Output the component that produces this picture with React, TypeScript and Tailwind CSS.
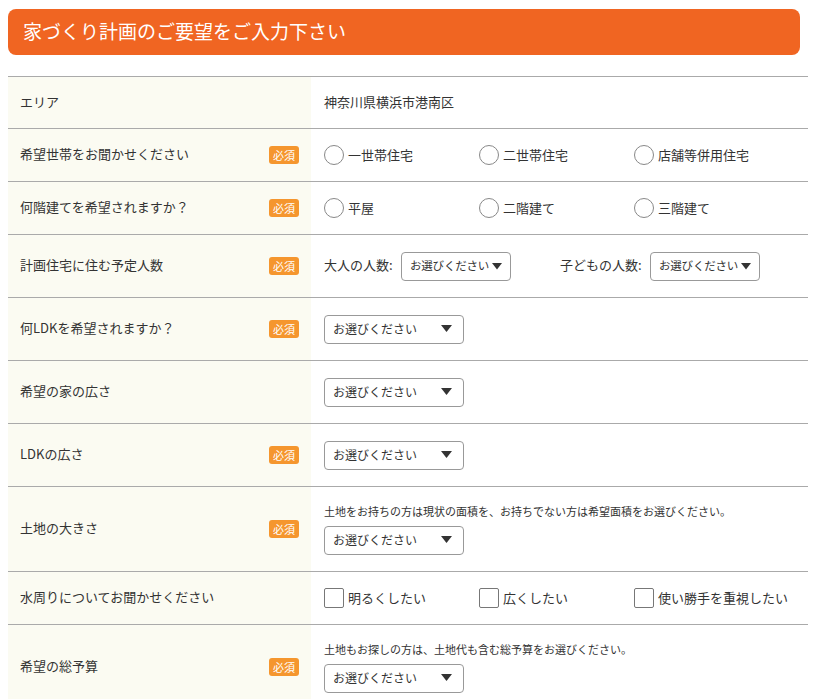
import React from "react";

const font = { fontFamily: '"Noto Sans CJK JP", "Noto Sans", sans-serif' };

function Badge() {
  return (
    <span className="inline-flex items-center justify-center w-[30px] h-[18px] rounded-[3px] bg-[#f5962e] text-white text-[11px] leading-none">
      必須
    </span>
  );
}

function Arrow({ small = false }: { small?: boolean }) {
  return small ? (
    <svg width="10" height="7" viewBox="0 0 10 7" className="shrink-0 ml-[3px]">
      <path d="M0 0 L10 0 L5 6.5 Z" fill="#333" />
    </svg>
  ) : (
    <svg width="11" height="8" viewBox="0 0 11 8" className="shrink-0">
      <path d="M0 0 L11 0 L5.5 7 Z" fill="#333" />
    </svg>
  );
}

function Select({ w = 140, small = false }: { w?: number; small?: boolean }) {
  return (
    <div
      className={`flex items-center h-[29px] border border-[#999] rounded-[4px] bg-white whitespace-nowrap ${small ? "justify-start pl-[8px]" : "justify-between pl-[8px] pr-[11px]"}`}
      style={{ width: w }}
    >
      <span className={`${small ? "text-[11.5px] tracking-[-0.2px]" : "text-[12px]"} text-[#333] whitespace-nowrap`}>お選びください</span>
      <Arrow small={small} />
    </div>
  );
}

function Radio({ label }: { label: string }) {
  return (
    <div className="flex items-center w-[155px]">
      <span className="w-[20px] h-[20px] rounded-full border-[1.5px] border-[#888] bg-white" />
      <span className="ml-[4px] text-[13px] text-[#333]">{label}</span>
    </div>
  );
}

function Check({ label }: { label: string }) {
  return (
    <div className="flex items-center w-[155px]">
      <span className="w-[20px] h-[20px] rounded-[2px] border-[1.5px] border-[#777] bg-white" />
      <span className="ml-[4px] text-[13px] text-[#333]">{label}</span>
    </div>
  );
}

function Row({
  label,
  req,
  h,
  children,
}: {
  label: string;
  req?: boolean;
  h: number;
  children: React.ReactNode;
}) {
  return (
    <div className="flex border-t border-[#aaa]" style={{ height: h }}>
      <div className="w-[303px] shrink-0 bg-[#fbfbf2] flex items-center justify-between pl-[12px] pr-[12px]">
        <span className="text-[13px] text-[#333] -mt-[2px]">{label}</span>
        {req && <Badge />}
      </div>
      <div className="flex-1 pl-[13px] flex items-center">{children}</div>
    </div>
  );
}

export default function App() {
  return (
    <div className="w-[817px] h-[699px] bg-white overflow-hidden" style={font}>
      <div className="pt-[9px] px-[8px] w-[808px]">
        <div className="h-[46px] rounded-[8px] bg-[#f06522] flex items-center pl-[15px]">
          <span className="text-white text-[19px] -mt-[1px]">家づくり計画のご要望をご入力下さい</span>
        </div>
      </div>
      <div className="mt-[21px] ml-[8px] w-[800px]">
        <Row label="エリア" h={52}>
          <span className="text-[13px] text-[#333] -mt-[2px]">神奈川県横浜市港南区</span>
        </Row>
        <Row label="希望世帯をお聞かせください" req h={53}>
          <Radio label="一世帯住宅" />
          <Radio label="二世帯住宅" />
          <Radio label="店舗等併用住宅" />
        </Row>
        <Row label="何階建てを希望されますか？" req h={53}>
          <Radio label="平屋" />
          <Radio label="二階建て" />
          <Radio label="三階建て" />
        </Row>
        <Row label="計画住宅に住む予定人数" req h={63}>
          <span className="text-[13px] text-[#333] w-[77px] -mt-[2px]">大人の人数:</span>
          <Select w={110} small />
          <span className="ml-[49px] text-[13px] text-[#333] w-[90px] -mt-[2px]">子どもの人数:</span>
          <Select w={110} small />
        </Row>
        <Row label="何LDKを希望されますか？" req h={63}>
          <Select />
        </Row>
        <Row label="希望の家の広さ" h={63}>
          <Select />
        </Row>
        <Row label="LDKの広さ" req h={63}>
          <Select />
        </Row>
        <Row label="土地の大きさ" req h={85}>
          <div className="flex flex-col">
            <span className="text-[11px] text-[#333] leading-[14px]">
              土地をお持ちの方は現状の面積を、お持ちでない方は希望面積をお選びください。
            </span>
            <div className="mt-[8px]">
              <Select />
            </div>
          </div>
        </Row>
        <Row label="水周りについてお聞かせください" h={53}>
          <Check label="明るくしたい" />
          <Check label="広くしたい" />
          <Check label="使い勝手を重視したい" />
        </Row>
        <Row label="希望の総予算" req h={85}>
          <div className="flex flex-col">
            <span className="text-[11px] text-[#333] leading-[14px]">
              土地もお探しの方は、土地代も含む総予算をお選びください。
            </span>
            <div className="mt-[8px]">
              <Select />
            </div>
          </div>
        </Row>
      </div>
    </div>
  );
}
